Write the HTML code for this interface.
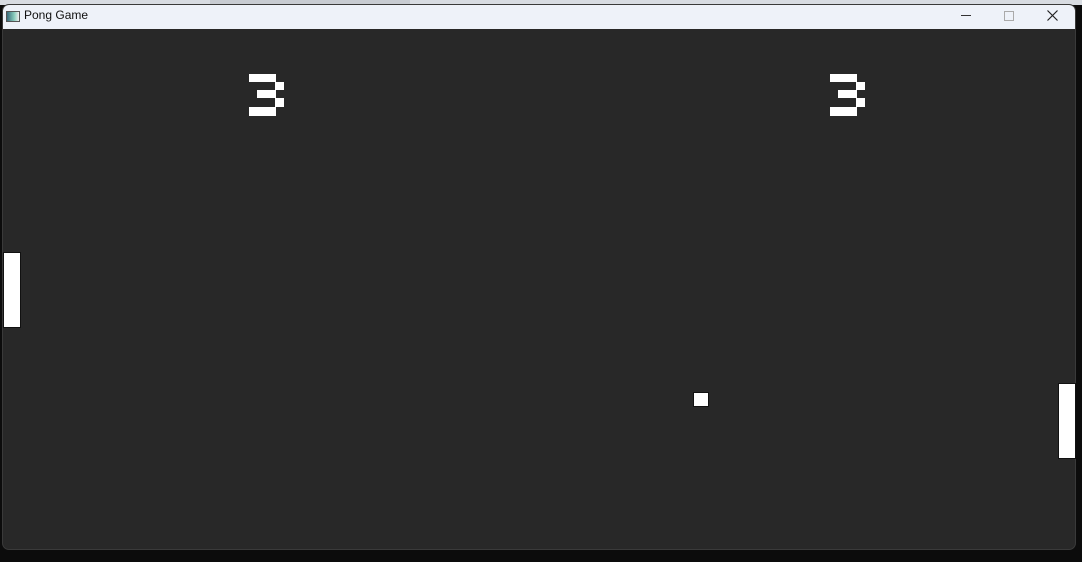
<!DOCTYPE html>
<html><head><style>
body{margin:0;width:1082px;height:562px;background:#0c0c0c;position:relative;overflow:hidden;font-family:"Liberation Sans",sans-serif}
div{position:absolute}
.w{background:#fff;border:1px solid #111;box-sizing:border-box}
.d{background:#fff}
</style></head><body>
<div style="left:0;top:0;width:1082px;height:5px;background:#d8dce2"></div>
<div style="left:210px;top:0;width:200px;height:5px;background:#c8ccd2"></div>
<div style="left:2px;top:4px;width:1074px;height:546px;background:#282828;border-radius:7px;border:1px solid #3a3a3a;box-sizing:border-box;overflow:hidden">
  <div style="left:0;top:0;width:1074px;height:24px;background:#eef2f9"></div>
</div>
<div style="left:6px;top:11px;width:12px;height:9px;border:1px solid #555;background:linear-gradient(90deg,#3a6b7c,#8cb 60%,#eee)"></div>
<div style="left:24px;top:8px;font-size:12px;color:#111">Pong Game</div>
<div style="left:961px;top:15px;width:10px;height:1px;background:#333"></div>
<div style="left:1004px;top:11px;width:8px;height:8px;border:1px solid #aaa"></div>
<svg style="position:absolute;left:1047px;top:10px" width="11" height="11"><path d="M0.5 0.5L10.5 10.5M10.5 0.5L0.5 10.5" stroke="#222" stroke-width="1.2"/></svg>

<div class="d" style="left:249px;top:74px;width:27px;height:8px"></div>
<div class="d" style="left:275px;top:82px;width:9px;height:8px"></div>
<div class="d" style="left:257px;top:90px;width:19px;height:8px"></div>
<div class="d" style="left:275px;top:98px;width:9px;height:9px"></div>
<div class="d" style="left:249px;top:107px;width:27px;height:9px"></div>

<div class="d" style="left:830px;top:74px;width:27px;height:8px"></div>
<div class="d" style="left:856px;top:82px;width:9px;height:8px"></div>
<div class="d" style="left:838px;top:90px;width:19px;height:8px"></div>
<div class="d" style="left:856px;top:98px;width:9px;height:9px"></div>
<div class="d" style="left:830px;top:107px;width:27px;height:9px"></div>

<div class="w" style="left:3px;top:252px;width:18px;height:76px"></div>
<div class="w" style="left:1058px;top:383px;width:18px;height:76px"></div>
<div class="w" style="left:693px;top:392px;width:16px;height:15px"></div>
</body></html>
